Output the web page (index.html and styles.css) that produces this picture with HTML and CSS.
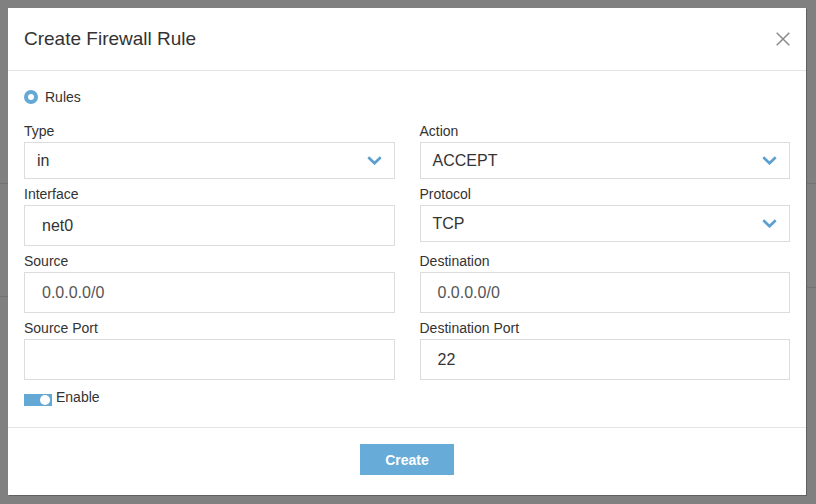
FILE: index.html
```html
<!DOCTYPE html>
<html>
<head>
<meta charset="utf-8">
<link rel="stylesheet" href="styles.css">
</head>
<body>
<div class="modal">
  <div class="modal-header">
    <h1 class="title">Create Firewall Rule</h1>
    <button class="close" aria-label="Close">
      <svg width="14" height="14" viewBox="0 0 14 14"><path d="M0.7 0.7 L13.3 13.3 M13.3 0.7 L0.7 13.3" stroke="#8a8a8a" stroke-width="1.5" fill="none"/></svg>
    </button>
  </div>
  <div class="modal-body">
    <label class="radio-row"><span class="radio"></span><span>Rules</span></label>
    <div class="grid">
      <div class="field">
        <div class="label">Type</div>
        <div class="select"><span>in</span><svg class="chev" width="15" height="9" viewBox="0 0 15 9"><polyline points="1.3,1.3 7.5,7.3 13.7,1.3" fill="none" stroke="#5b9fd1" stroke-width="2.6"/></svg></div>
      </div>
      <div class="field">
        <div class="label">Action</div>
        <div class="select"><span>ACCEPT</span><svg class="chev" width="15" height="9" viewBox="0 0 15 9"><polyline points="1.3,1.3 7.5,7.3 13.7,1.3" fill="none" stroke="#5b9fd1" stroke-width="2.6"/></svg></div>
      </div>
      <div class="field">
        <div class="label">Interface</div>
        <div class="input">net0</div>
      </div>
      <div class="field">
        <div class="label">Protocol</div>
        <div class="select"><span>TCP</span><svg class="chev" width="15" height="9" viewBox="0 0 15 9"><polyline points="1.3,1.3 7.5,7.3 13.7,1.3" fill="none" stroke="#5b9fd1" stroke-width="2.6"/></svg></div>
      </div>
      <div class="field">
        <div class="label">Source</div>
        <div class="input muted">0.0.0.0/0</div>
      </div>
      <div class="field">
        <div class="label">Destination</div>
        <div class="input muted">0.0.0.0/0</div>
      </div>
      <div class="field">
        <div class="label">Source Port</div>
        <div class="input"></div>
      </div>
      <div class="field">
        <div class="label">Destination Port</div>
        <div class="input">22</div>
      </div>
    </div>
    <div class="enable-row"><span class="toggle"><span class="knob"></span></span><span>Enable</span></div>
  </div>
  <div class="modal-footer">
    <button class="btn-create">Create</button>
  </div>
</div>
</body>
</html>
```
FILE: styles.css
```css
html {
  background-color: #808080;
  background-image:
    linear-gradient(#727272, #727272),
    linear-gradient(#727272, #727272),
    linear-gradient(#727272, #727272),
    linear-gradient(#727272, #727272);
  background-size: 8px 1px, 8px 1px, 10px 1px, 10px 1px;
  background-position: 0 183px, 0 296px, 806px 183px, 806px 287px;
  background-repeat: no-repeat;
  height: 100%;
}
body {
  margin: 0;
  padding: 8px;
  font-family: "Liberation Sans", Arial, sans-serif;
  color: #333;
}
.modal {
  width: 798px;
  height: 487px;
  background: #fff;
  box-shadow: 1px 1px 0 #606060;
  display: flex;
  flex-direction: column;
  box-sizing: border-box;
}
.modal-header {
  height: 62px;
  border-bottom: 1px solid #e3e3e3;
  display: flex;
  align-items: center;
  justify-content: space-between;
  padding: 0 16px;
  flex: none;
}
.title {
  margin: 0;
  font-size: 19px;
  font-weight: normal;
  color: #333;
  line-height: 24px;
}
.close {
  border: 0;
  background: none;
  padding: 0;
  width: 14px;
  height: 14px;
  display: block;
}
.close svg { display: block; }
.modal-body {
  padding: 16px 16px 0;
  height: 357px;
  box-sizing: border-box;
  border-bottom: 1px solid #e3e3e3;
  flex: none;
}
.radio-row {
  display: flex;
  align-items: center;
  gap: 7px;
  font-size: 14px;
  line-height: 20px;
}
.radio {
  width: 14px;
  height: 14px;
  border-radius: 50%;
  background: #64a8d6;
  position: relative;
  flex: none;
}
.radio::after {
  content: "";
  position: absolute;
  left: 4px;
  top: 4px;
  width: 6px;
  height: 6px;
  border-radius: 50%;
  background: #fff;
}
.grid {
  display: grid;
  grid-template-columns: 1fr 1fr;
  column-gap: 25px;
  margin-top: 14px;
  align-items: start;
}
.field {
  margin-bottom: 5px;
}
.label {
  font-size: 14px;
  line-height: 20px;
  margin-bottom: 1px;
  color: #333;
}
.select {
  height: 37px;
  box-sizing: border-box;
  border: 1px solid #dcdcdc;
  display: flex;
  align-items: center;
  justify-content: space-between;
  padding: 0 12px;
  font-size: 16px;
  color: #333;
}
.chev { display: block; }
.input {
  height: 41px;
  box-sizing: border-box;
  border: 1px solid #dcdcdc;
  display: flex;
  align-items: center;
  padding: 0 17px;
  font-size: 16px;
  color: #333;
}
.input.muted { color: #555; }
.enable-row {
  display: flex;
  align-items: flex-start;
  gap: 4px;
  font-size: 14px;
  line-height: 20px;
  margin-top: 2px;
}
.toggle {
  width: 28px;
  height: 12px;
  background: #64a8d6;
  margin-top: 7px;
  position: relative;
  flex: none;
}
.knob {
  position: absolute;
  width: 10px;
  height: 10px;
  border-radius: 50%;
  background: #fff;
  left: 16px;
  top: 1px;
}
.modal-footer {
  display: flex;
  justify-content: center;
  padding-top: 16px;
}
.btn-create {
  width: 94px;
  height: 31px;
  border: 0;
  background: #67acd9;
  color: #fff;
  font-family: "Liberation Sans", Arial, sans-serif;
  font-size: 14px;
  font-weight: bold;
  padding: 0;
}
```
